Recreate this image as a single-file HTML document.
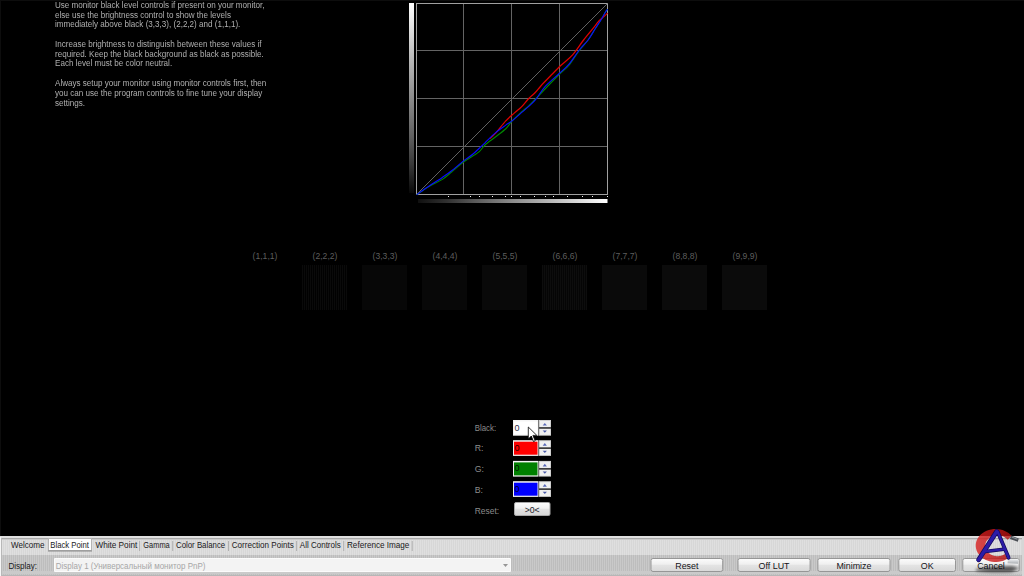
<!DOCTYPE html>
<html><head><meta charset="utf-8">
<style>
*{margin:0;padding:0;box-sizing:border-box}
html,body{width:1024px;height:576px;overflow:hidden;background:#000}
body{position:relative;font-family:"Liberation Sans",sans-serif}
.a{position:absolute;white-space:nowrap}
svg text{font-family:"Liberation Sans",sans-serif}
#intro{left:54.5px;top:0.8px;font-size:8.4px;line-height:9.78px;color:#b0b0b0;transform:scaleX(0.964);transform-origin:0 0}
</style></head><body>
<div class="a" style="left:0;top:0;width:1024px;height:1px;background:#0d0d0d"></div>
<div class="a" style="left:0;top:0;width:1px;height:536px;background:#0d0d0d"></div>
<div class="a" id="intro">Use monitor black level controls if present on your monitor,<br>else use the brightness control to show the levels<br>immediately above black (3,3,3), (2,2,2) and (1,1,1).<br><br>Increase brightness to distinguish between these values if<br>required. Keep the black background as black as possible.<br>Each level must be color neutral.<br><br>Always setup your monitor using monitor controls first, then<br>you can use the program controls to fine tune your display<br>settings.</div>
<svg class="a" style="left:0;top:0" width="1024" height="576"><defs>
<linearGradient id="gv" x1="0" y1="0" x2="0" y2="1"><stop offset="0" stop-color="#fff"/><stop offset="0.3" stop-color="#b8b8b8"/><stop offset="0.5" stop-color="#8c8c8c"/><stop offset="0.7" stop-color="#606060"/><stop offset="0.85" stop-color="#383838"/><stop offset="1" stop-color="#080808"/></linearGradient>
<linearGradient id="gh" x1="0" y1="0" x2="1" y2="0"><stop offset="0" stop-color="#101010"/><stop offset="0.15" stop-color="#303030"/><stop offset="0.3" stop-color="#5a5a5a"/><stop offset="0.5" stop-color="#8c8c8c"/><stop offset="0.7" stop-color="#b8b8b8"/><stop offset="1" stop-color="#fff"/></linearGradient>
<linearGradient id="btn" x1="0" y1="0" x2="0" y2="1"><stop offset="0" stop-color="#fdfdfd"/><stop offset="0.45" stop-color="#f0f0f0"/><stop offset="0.5" stop-color="#e2e2e2"/><stop offset="1" stop-color="#d6d6d6"/></linearGradient>
</defs><rect x="409" y="3" width="5" height="190" fill="url(#gv)"/><rect x="418" y="199" width="189.5" height="4" fill="url(#gh)"/><g stroke="#646464" stroke-width="1" fill="none"><line x1="463.5" y1="3.5" x2="463.5" y2="194.5"/><line x1="511.5" y1="3.5" x2="511.5" y2="194.5"/><line x1="559.5" y1="3.5" x2="559.5" y2="194.5"/><line x1="416.5" y1="50.5" x2="607.5" y2="50.5"/><line x1="416.5" y1="98.5" x2="607.5" y2="98.5"/><line x1="416.5" y1="146.5" x2="607.5" y2="146.5"/></g><rect x="416.5" y="3.5" width="191" height="191" stroke="#a0a0a0" fill="none"/><line x1="416.5" y1="194.5" x2="607.5" y2="3.5" stroke="#626262" stroke-width="1"/><path fill="none" stroke="#008800" stroke-width="1.1" d="M416.7,194.7 C418.75,193.33 424.72,189.05 429,186.5 C433.28,183.95 438.63,181.82 442.4,179.4 C446.17,176.98 448.08,174.90 451.6,172 C455.12,169.10 459.98,164.67 463.5,162 C467.02,159.33 470.07,157.72 472.7,156 C475.33,154.28 477.25,153.53 479.3,151.7 C481.35,149.87 482.32,147.45 485,145 C487.68,142.55 491.93,139.71 495.4,137 C498.87,134.29 503.02,131.43 505.8,128.75 C508.58,126.07 509.48,123.69 512.1,120.9 C514.72,118.11 518.73,114.52 521.5,112 C524.27,109.48 526.15,108.22 528.75,105.8 C531.35,103.38 534.39,100.30 537.1,97.5 C539.81,94.70 541.32,92.83 545,89 C548.68,85.17 555.23,78.42 559.2,74.5 C563.17,70.58 565.45,69.50 568.8,65.5 C572.15,61.50 576.08,54.75 579.3,50.5 C582.52,46.25 585.42,43.67 588.1,40 C590.78,36.33 593.13,32.04 595.4,28.5 C597.67,24.96 599.97,21.58 601.7,18.75 C603.43,15.92 604.82,13.06 605.8,11.5 C606.78,9.94 607.30,9.75 607.6,9.4"/><path fill="none" stroke="#e00000" stroke-width="1.25" d="M489.9,138.5 C490.82,137.65 492.75,136.33 495.4,133.4 C498.05,130.47 502.67,124.28 505.8,120.9 C508.93,117.52 511.58,115.43 514.2,113.1 C516.82,110.77 519.08,109.33 521.5,106.9 C523.92,104.47 526.50,100.85 528.75,98.5 C531.00,96.15 532.92,94.97 535,92.8 C537.08,90.63 538.65,88.33 541.25,85.5 C543.85,82.67 547.31,79.17 550.6,75.8 C553.89,72.43 557.33,68.80 561,65.3 C564.67,61.80 568.83,59.02 572.6,54.8 C576.37,50.58 579.92,44.73 583.6,40 C587.28,35.27 592.15,29.60 594.7,26.4 C597.25,23.20 597.52,22.30 598.9,20.8 C600.28,19.30 601.55,18.67 603,17.4 C604.45,16.13 606.83,13.90 607.6,13.2"/><path fill="none" stroke="#0a0aff" stroke-width="1.15" d="M416.7,194.7 C418.78,193.25 424.92,188.88 429.2,186 C433.48,183.12 438.67,179.93 442.4,177.4 C446.13,174.87 448.08,173.55 451.6,170.8 C455.12,168.05 459.98,163.65 463.5,160.9 C467.02,158.15 469.85,156.62 472.7,154.3 C475.55,151.98 478.55,148.92 480.6,147 C482.65,145.08 482.53,145.15 485,142.8 C487.47,140.45 491.93,135.85 495.4,132.9 C498.87,129.95 503.02,127.10 505.8,125.1 C508.58,123.10 509.67,122.82 512.1,120.9 C514.53,118.98 517.62,116.02 520.4,113.6 C523.17,111.18 526.15,108.82 528.75,106.4 C531.35,103.98 533.29,102.40 536,99.1 C538.71,95.80 541.13,90.87 545,86.6 C548.87,82.33 555.23,77.20 559.2,73.5 C563.17,69.80 565.45,68.32 568.8,64.4 C572.15,60.48 576.08,54.07 579.3,50 C582.52,45.93 585.42,43.58 588.1,40 C590.78,36.42 593.13,32.04 595.4,28.5 C597.67,24.96 599.97,21.58 601.7,18.75 C603.43,15.92 604.82,13.06 605.8,11.5 C606.78,9.94 607.30,9.75 607.6,9.4"/><g fill="#f0f0f0"><rect x="448" y="196" width="1" height="1"/><rect x="470" y="196" width="1" height="1"/><rect x="479" y="196" width="1" height="1"/><rect x="492" y="196" width="1" height="1"/><rect x="505" y="196" width="1" height="1"/><rect x="511" y="196" width="1" height="1"/><rect x="520" y="196" width="1" height="1"/><rect x="534" y="196" width="1" height="1"/><rect x="545" y="196" width="1" height="1"/><rect x="553" y="196" width="1" height="1"/><rect x="567" y="196" width="1" height="1"/><rect x="582" y="196" width="1" height="1"/><rect x="592" y="196" width="1" height="1"/><rect x="607" y="196" width="1" height="1"/></g><text x="265" y="258.8" font-size="8.6" fill="#5e5e5e" text-anchor="middle">(1,1,1)</text><text x="325" y="258.8" font-size="8.6" fill="#5e5e5e" text-anchor="middle">(2,2,2)</text><text x="385" y="258.8" font-size="8.6" fill="#5e5e5e" text-anchor="middle">(3,3,3)</text><text x="445" y="258.8" font-size="8.6" fill="#5e5e5e" text-anchor="middle">(4,4,4)</text><text x="505" y="258.8" font-size="8.6" fill="#5e5e5e" text-anchor="middle">(5,5,5)</text><text x="565" y="258.8" font-size="8.6" fill="#5e5e5e" text-anchor="middle">(6,6,6)</text><text x="625" y="258.8" font-size="8.6" fill="#5e5e5e" text-anchor="middle">(7,7,7)</text><text x="685" y="258.8" font-size="8.6" fill="#5e5e5e" text-anchor="middle">(8,8,8)</text><text x="745" y="258.8" font-size="8.6" fill="#5e5e5e" text-anchor="middle">(9,9,9)</text></svg>
<div class="a" style="left:242px;top:265px;width:45px;height:45px;background:#000000"></div>
<div class="a" style="left:302px;top:265px;width:45px;height:45px;background:repeating-linear-gradient(90deg,#0a0a0a 0 1px,#010101 1px 2px)"></div>
<div class="a" style="left:362px;top:265px;width:45px;height:45px;background:#070707"></div>
<div class="a" style="left:422px;top:265px;width:45px;height:45px;background:#080808"></div>
<div class="a" style="left:482px;top:265px;width:45px;height:45px;background:#090909"></div>
<div class="a" style="left:542px;top:265px;width:45px;height:45px;background:repeating-linear-gradient(90deg,#0d0d0d 0 1px,#050505 1px 2px)"></div>
<div class="a" style="left:602px;top:265px;width:45px;height:45px;background:#0a0a0a"></div>
<div class="a" style="left:662px;top:265px;width:45px;height:45px;background:#0b0b0b"></div>
<div class="a" style="left:722px;top:265px;width:45px;height:45px;background:#0b0b0b"></div>
<svg class="a" style="left:0;top:0" width="1024" height="576"><defs><linearGradient id="btn2" x1="0" y1="0" x2="0" y2="1"><stop offset="0" stop-color="#fdfdfd"/><stop offset="0.45" stop-color="#f0f0f0"/><stop offset="0.5" stop-color="#e2e2e2"/><stop offset="1" stop-color="#d6d6d6"/></linearGradient></defs><text x="474.8" y="430.8" font-size="8.7" fill="#8c8c8c" text-anchor="start" textLength="21.3" lengthAdjust="spacingAndGlyphs">Black:</text><text x="474.8" y="451" font-size="8.7" fill="#8c8c8c" text-anchor="start">R:</text><text x="474.8" y="471.9" font-size="8.7" fill="#8c8c8c" text-anchor="start">G:</text><text x="474.8" y="492.8" font-size="8.7" fill="#8c8c8c" text-anchor="start">B:</text><text x="474.8" y="513.6" font-size="8.7" fill="#8c8c8c" text-anchor="start" textLength="24.3" lengthAdjust="spacingAndGlyphs">Reset:</text><rect x="513" y="420" width="25.5" height="15.7" fill="#f4f4f4"/><rect x="514" y="421.5" width="23.5" height="13" fill="#ffffff"/><text x="514.6" y="430.5" font-size="9" fill="#303048" text-anchor="start">0</text><rect x="539" y="420" width="12" height="15.7" fill="#cfcfcf"/><rect x="540" y="421" width="10" height="6" fill="#f0f0f0"/><rect x="540" y="428.8" width="10" height="6" fill="#f0f0f0"/><rect x="539" y="427.2" width="12" height="1.5" fill="#2e2e2e"/><path d="M542.7 425.6 L544.8 422.9 L546.9 425.6 Z" fill="#5a6ab8"/><path d="M542.7 430.6 L544.8 432.8 L546.9 430.6 Z" fill="#4a5aa8"/><rect x="513" y="440.2" width="25.5" height="15.7" fill="#f4f4f4"/><rect x="514" y="441.7" width="23.5" height="13" fill="#ff0000"/><text x="514.6" y="450.7" font-size="9" fill="#280000" text-anchor="start">0</text><rect x="539" y="440.2" width="12" height="15.7" fill="#cfcfcf"/><rect x="540" y="441.2" width="10" height="6" fill="#f0f0f0"/><rect x="540" y="449.0" width="10" height="6" fill="#f0f0f0"/><rect x="539" y="447.4" width="12" height="1.5" fill="#2e2e2e"/><path d="M542.7 445.8 L544.8 443.09999999999997 L546.9 445.8 Z" fill="#5a6ab8"/><path d="M542.7 450.8 L544.8 453.0 L546.9 450.8 Z" fill="#4a5aa8"/><rect x="513" y="460.9" width="25.5" height="15.7" fill="#f4f4f4"/><rect x="514" y="462.4" width="23.5" height="13" fill="#008000"/><text x="514.6" y="471.4" font-size="9" fill="#001400" text-anchor="start">0</text><rect x="539" y="460.9" width="12" height="15.7" fill="#cfcfcf"/><rect x="540" y="461.9" width="10" height="6" fill="#f0f0f0"/><rect x="540" y="469.7" width="10" height="6" fill="#f0f0f0"/><rect x="539" y="468.09999999999997" width="12" height="1.5" fill="#2e2e2e"/><path d="M542.7 466.5 L544.8 463.79999999999995 L546.9 466.5 Z" fill="#5a6ab8"/><path d="M542.7 471.5 L544.8 473.7 L546.9 471.5 Z" fill="#4a5aa8"/><rect x="513" y="481.2" width="25.5" height="15.7" fill="#f4f4f4"/><rect x="514" y="482.7" width="23.5" height="13" fill="#0000ff"/><text x="514.6" y="491.7" font-size="9" fill="#000028" text-anchor="start">0</text><rect x="539" y="481.2" width="12" height="15.7" fill="#cfcfcf"/><rect x="540" y="482.2" width="10" height="6" fill="#f0f0f0"/><rect x="540" y="490.0" width="10" height="6" fill="#f0f0f0"/><rect x="539" y="488.4" width="12" height="1.5" fill="#2e2e2e"/><path d="M542.7 486.8 L544.8 484.09999999999997 L546.9 486.8 Z" fill="#5a6ab8"/><path d="M542.7 491.8 L544.8 494.0 L546.9 491.8 Z" fill="#4a5aa8"/><rect x="514.5" y="502.5" width="35.5" height="13" rx="1.5" fill="url(#btn2)" stroke="#a8a8a8"/><text x="532.2" y="512.6" font-size="8.7" fill="#202028" text-anchor="middle">&gt;0&lt;</text><path d="M528.3 427 L528.3 439 L531.3 436 L533.5 441.6 L535.2 440.8 L532.9 435.4 L536.8 435.4 Z" fill="#fff" stroke="#000" stroke-width="0.8" stroke-linejoin="miter"/></svg>
<svg class="a" style="left:0;top:0" width="1024" height="576"><defs><linearGradient id="bg" x1="0" y1="0" x2="0" y2="1"><stop offset="0" stop-color="#fcfcfc"/><stop offset="0.45" stop-color="#efefef"/><stop offset="0.5" stop-color="#e4e4e4"/><stop offset="1" stop-color="#d8d8d8"/></linearGradient></defs><rect x="0" y="536" width="1024" height="40" fill="#d2d2d2"/><rect x="0" y="536" width="1024" height="2" fill="#e0e0e0"/><rect x="0" y="538" width="1024" height="1" fill="#a9a9a9"/><rect x="0" y="539" width="1024" height="1" fill="#cbcbcb"/><rect x="0" y="540" width="1024" height="15" fill="url(#st2)"/><defs><pattern id="st" x="0" y="0" width="2" height="2" patternUnits="userSpaceOnUse"><rect width="1" height="2" fill="#c9c9c9"/><rect x="1" width="1" height="2" fill="#bdbdbd"/></pattern><pattern id="st2" x="0" y="0" width="2" height="2" patternUnits="userSpaceOnUse"><rect width="1" height="2" fill="#dfdfdf"/><rect x="1" width="1" height="2" fill="#d7d7d7"/></pattern></defs><rect x="0" y="555" width="1024" height="21" fill="url(#st)"/><rect x="0" y="571" width="1024" height="3" fill="#cacaca"/><rect x="0" y="575" width="1024" height="1" fill="#b6b6b6"/><rect x="0" y="537" width="1" height="39" fill="#f6f6f6"/><rect x="1" y="538" width="1" height="38" fill="#b8b8b8"/><rect x="1022" y="536" width="2" height="40" fill="#d6d6d6"/><rect x="48.5" y="538.5" width="43" height="12" fill="#ffffff" stroke="#b4b4b4"/><line x1="48" y1="551" x2="92" y2="551" stroke="#8a8a8a"/><text x="10.9" y="548.1" font-size="8.7" fill="#1a1a22" text-anchor="start" textLength="33.599999999999994" lengthAdjust="spacingAndGlyphs">Welcome</text><text x="50.300000000000004" y="548.1" font-size="8.7" fill="#1a1a22" text-anchor="start" textLength="38.699999999999996" lengthAdjust="spacingAndGlyphs">Black Point</text><text x="95.39999999999999" y="548.1" font-size="8.7" fill="#1a1a22" text-anchor="start" textLength="41.9" lengthAdjust="spacingAndGlyphs">White Point</text><text x="143.29999999999998" y="548.1" font-size="8.7" fill="#1a1a22" text-anchor="start" textLength="26.400000000000002" lengthAdjust="spacingAndGlyphs">Gamma</text><text x="176.0" y="548.1" font-size="8.7" fill="#1a1a22" text-anchor="start" textLength="49.199999999999996" lengthAdjust="spacingAndGlyphs">Color Balance</text><text x="231.79999999999998" y="548.1" font-size="8.7" fill="#1a1a22" text-anchor="start" textLength="61.9" lengthAdjust="spacingAndGlyphs">Correction Points</text><text x="299.8" y="548.1" font-size="8.7" fill="#1a1a22" text-anchor="start" textLength="41.0" lengthAdjust="spacingAndGlyphs">All Controls</text><text x="347.0" y="548.1" font-size="8.7" fill="#1a1a22" text-anchor="start" textLength="62.4" lengthAdjust="spacingAndGlyphs">Reference Image</text><rect x="139.1" y="541" width="1" height="10" fill="#b0b0b0"/><rect x="172.2" y="541" width="1" height="10" fill="#b0b0b0"/><rect x="228.0" y="541" width="1" height="10" fill="#b0b0b0"/><rect x="296.1" y="541" width="1" height="10" fill="#b0b0b0"/><rect x="343.2" y="541" width="1" height="10" fill="#b0b0b0"/><rect x="411.7" y="541" width="1" height="10" fill="#b0b0b0"/><text x="8.4" y="568.8" font-size="8.7" fill="#1a1a22" text-anchor="start" textLength="28.7" lengthAdjust="spacingAndGlyphs">Display:</text><rect x="54" y="558" width="457" height="14" rx="1" fill="#fbfbfb"/><rect x="55" y="559" width="455" height="12" fill="#f3f3f3"/><text x="55.8" y="568.8" font-size="8.7" fill="#a6a6a6" text-anchor="start" textLength="149.6" lengthAdjust="spacingAndGlyphs">Display 1 (Универсальный монитор PnP)</text><path d="M503 564 L508 564 L505.5 567 Z" fill="#959595"/><rect x="651.0" y="558.5" width="71.70000000000005" height="13" rx="2" fill="url(#bg)" stroke="#969696"/><text x="686.85" y="568.7" font-size="8.9" fill="#141418" text-anchor="middle">Reset</text><rect x="738.0" y="558.5" width="72.10000000000002" height="13" rx="2" fill="url(#bg)" stroke="#969696"/><text x="774.05" y="568.7" font-size="8.9" fill="#141418" text-anchor="middle">Off LUT</text><rect x="817.9" y="558.5" width="72.10000000000002" height="13" rx="2" fill="url(#bg)" stroke="#969696"/><text x="853.95" y="568.7" font-size="8.9" fill="#141418" text-anchor="middle">Minimize</text><rect x="898.8" y="558.5" width="56.700000000000045" height="13" rx="2" fill="url(#bg)" stroke="#969696"/><text x="927.15" y="568.7" font-size="8.9" fill="#141418" text-anchor="middle">OK</text><rect x="962.8" y="558.5" width="56.40000000000009" height="13" rx="2" fill="url(#bg)" stroke="#969696"/><text x="991.0" y="568.7" font-size="8.9" fill="#141418" text-anchor="middle">Cancel</text></svg>
<svg class="a" style="left:0;top:0" width="1024" height="576"><defs><linearGradient id="rc" x1="0" y1="0" x2="1" y2="0"><stop offset="0" stop-color="#d82020"/><stop offset="0.5" stop-color="#c81818"/><stop offset="1" stop-color="#b01010"/></linearGradient><linearGradient id="cap2" x1="0" y1="0" x2="0" y2="1"><stop offset="0" stop-color="#f4f6f8"/><stop offset="1" stop-color="#a8acb0"/></linearGradient><filter id="bl" x="-50%" y="-50%" width="200%" height="200%"><feGaussianBlur stdDeviation="1.5"/></filter></defs><path d="M976 569 Q995 566 1012 566 L1019 568 L1012 572 Q990 573 976 571 Z" fill="#000" opacity="0.6" filter="url(#bl)"/><path d="M1011.72,536.04 L1010.26,534.50 L1008.59,533.12 L1006.74,531.92 L1004.73,530.90 L1002.60,530.10 L1000.36,529.50 L998.05,529.14 L995.71,529.00 L993.36,529.10 L991.05,529.42 L988.79,529.98 L986.63,530.75 L984.60,531.73 L982.72,532.90 L981.02,534.25 L979.52,535.76 L978.25,537.40 L977.22,539.16 L976.45,541.01 L975.94,542.92 L975.71,544.87 L975.76,546.82 L976.09,548.76 L976.69,550.65 L977.56,552.47 L978.67,554.19 L980.03,555.79 L981.60,557.25 L983.36,558.54 L985.30,559.64 L987.38,560.55 L989.58,561.24 L991.86,561.72 L994.19,561.96 L996.54,561.98 L998.87,561.76 L1001.16,561.31 L1003.36,560.64 L1005.46,559.76 L1007.42,558.68 L1004.90,554.11 L1003.69,554.79 L1002.38,555.34 L1001.01,555.77 L999.59,556.05 L998.14,556.19 L996.68,556.18 L995.24,556.02 L993.82,555.72 L992.46,555.29 L991.17,554.71 L989.96,554.02 L988.86,553.21 L987.89,552.29 L987.05,551.28 L986.35,550.20 L985.82,549.05 L985.44,547.86 L985.24,546.63 L985.21,545.40 L985.35,544.17 L985.66,542.97 L986.14,541.80 L986.78,540.69 L987.57,539.66 L988.50,538.71 L989.56,537.86 L990.73,537.12 L991.99,536.50 L993.33,536.01 L994.73,535.67 L996.17,535.46 L997.63,535.40 L999.08,535.49 L1000.52,535.72 L1001.91,536.09 L1003.24,536.60 L1004.48,537.24 L1005.63,538.00 L1006.67,538.87 L1007.58,539.83 Z" fill="url(#rc)" opacity="0.8"/><path d="M1011 535.5 L1018.8 538.6 L1017.8 541.8 L1010 539 Z" fill="#4a4e54"/><path d="M1012 536.5 L1017.5 538.8 L1017.2 539.8 L1011.5 537.6 Z" fill="#8a9096"/><path d="M1008 558.8 L1018.5 559.5 L1018 563.8 L1007.5 563.2 Z" fill="url(#cap2)"/><g stroke-linecap="round" fill="none"><line x1="978.6" y1="559.8" x2="996.6" y2="531.6" stroke="#120a5c" stroke-width="4.8"/><line x1="997.6" y1="531.6" x2="1008.6" y2="557.8" stroke="#120a5c" stroke-width="3.8"/><line x1="985.5" y1="551.4" x2="1003.8" y2="549.2" stroke="#120a5c" stroke-width="3.5"/><line x1="978.6" y1="559.8" x2="996.6" y2="531.6" stroke="#2c1ca8" stroke-width="3.4"/><line x1="997.6" y1="531.6" x2="1008.6" y2="557.8" stroke="#2c1ca8" stroke-width="2.4"/><line x1="985.5" y1="551.4" x2="1003.8" y2="549.2" stroke="#2c1ca8" stroke-width="2.1"/></g></svg>
</body></html>
